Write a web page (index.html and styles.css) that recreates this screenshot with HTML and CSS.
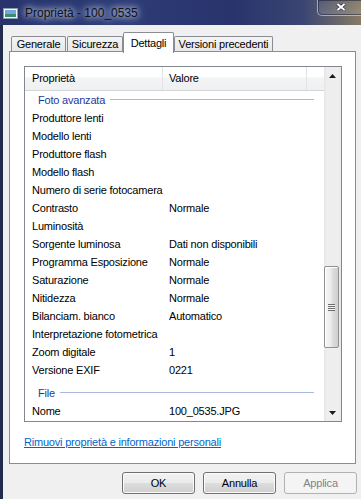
FILE: index.html
```html
<!DOCTYPE html>
<html lang="it">
<head>
    <meta charset="UTF-8">
    <title>Proprietà - 100_0535</title>
    <link rel="stylesheet" href="styles.css">
</head>
<body>
    <div class="finestra">
        <div class="titolo">
            <svg class="icona" width="15" height="11" viewBox="0 0 15 11">
                <rect x="0.5" y="0.5" width="14" height="10" fill="#f4f6f8" stroke="#8d9aab"/>
                <rect x="2" y="2" width="11" height="4" fill="#6ea9d8"/>
                <rect x="2" y="6" width="11" height="3" fill="#3f8a72"/>
            </svg>
            <span class="testo-titolo">Proprietà - 100_0535</span>
            <div class="chiudi">
                <svg width="10" height="8" viewBox="0 0 10 8">
                    <path d="M1.5 1 L8.5 7 M8.5 1 L1.5 7" stroke="#2a2f44" stroke-width="3.4"/>
                    <path d="M1.5 1 L8.5 7 M8.5 1 L1.5 7" stroke="#fff" stroke-width="2"/>
                </svg>
            </div>
        </div>

        <div class="corpo">
            <div class="schede">
                <div class="scheda generale">Generale</div>
                <div class="scheda sicurezza">Sicurezza</div>
                <div class="scheda attiva">Dettagli</div>
                <div class="scheda versioni">Versioni precedenti</div>
            </div>

            <div class="pannello">
                <div class="lista">
                    <div class="righe">
                        <div class="intestazione">
                            <div class="col1">Proprietà</div>
                            <div class="col2">Valore</div>
                            <div class="col3"></div>
                        </div>

                        <div class="gruppo"><span>Foto avanzata</span></div>
                        <div class="riga"><div class="col1">Produttore lenti</div><div class="col2"></div></div>
                        <div class="riga"><div class="col1">Modello lenti</div><div class="col2"></div></div>
                        <div class="riga"><div class="col1">Produttore flash</div><div class="col2"></div></div>
                        <div class="riga"><div class="col1">Modello flash</div><div class="col2"></div></div>
                        <div class="riga"><div class="col1">Numero di serie fotocamera</div><div class="col2"></div></div>
                        <div class="riga"><div class="col1">Contrasto</div><div class="col2">Normale</div></div>
                        <div class="riga"><div class="col1">Luminosità</div><div class="col2"></div></div>
                        <div class="riga"><div class="col1">Sorgente luminosa</div><div class="col2">Dati non disponibili</div></div>
                        <div class="riga"><div class="col1">Programma Esposizione</div><div class="col2">Normale</div></div>
                        <div class="riga"><div class="col1">Saturazione</div><div class="col2">Normale</div></div>
                        <div class="riga"><div class="col1">Nitidezza</div><div class="col2">Normale</div></div>
                        <div class="riga"><div class="col1">Bilanciam. bianco</div><div class="col2">Automatico</div></div>
                        <div class="riga"><div class="col1">Interpretazione fotometrica</div><div class="col2"></div></div>
                        <div class="riga"><div class="col1">Zoom digitale</div><div class="col2">1</div></div>
                        <div class="riga"><div class="col1">Versione EXIF</div><div class="col2">0221</div></div>

                        <div class="gruppo staccato"><span>File</span></div>
                        <div class="riga"><div class="col1">Nome</div><div class="col2">100_0535.JPG</div></div>
                    </div>

                    <div class="scroll">
                        <div class="freccia">
                            <svg width="7" height="4" viewBox="0 0 7 4"><polygon points="0,4 7,4 3.5,0" fill="#1a1a1a"/></svg>
                        </div>
                        <div class="binario">
                            <div class="cursore"><span class="presa"></span></div>
                        </div>
                        <div class="freccia">
                            <svg width="7" height="4" viewBox="0 0 7 4"><polygon points="0,0 7,0 3.5,4" fill="#1a1a1a"/></svg>
                        </div>
                    </div>
                </div>

                <a class="link" href="#">Rimuovi proprietà e informazioni personali</a>
            </div>

            <div class="pulsanti">
                <button type="button" class="predefinito">OK</button>
                <button type="button">Annulla</button>
                <button type="button" disabled>Applica</button>
            </div>
        </div>
    </div>
</body>
</html>
```

FILE: styles.css
```css
*{
    margin: 0;
    padding: 0;
    box-sizing: border-box;
}
html, body{
    width: 361px;
    height: 499px;
    overflow: hidden;
}
body{
    font-family: "Liberation Sans", Arial, sans-serif;
    font-size: 11px;
    letter-spacing: -0.2px;
    color: #000;
    background-color: #f0f0f0;
}
.finestra{
    width: 361px;
    height: 499px;
    display: flex;
    flex-direction: column;
}

/* barra del titolo */
.titolo{
    height: 25px;
    flex-shrink: 0;
    display: flex;
    align-items: center;
    position: relative;
    background: linear-gradient(90deg, #27336a 0%, #2d3b74 35%, #29346c 65%, #3a4573 84%, #877b63 100%);
}
.icona{
    margin-left: 3px;
    margin-top: 1px;
}
.testo-titolo{
    margin-left: 7px;
    font-size: 12px;
    letter-spacing: 0;
    color: #111;
    text-shadow: 0 0 5px #c3cfea, 0 0 9px #aebde2, 0 0 12px #9fb0da;
}
.chiudi{
    position: absolute;
    top: -1px;
    right: -4px;
    width: 48px;
    height: 17px;
    border: 1px solid rgba(225, 230, 245, 0.55);
    border-radius: 0 0 5px 5px;
    box-shadow: inset 0 0 0 1px rgba(20, 25, 50, 0.5);
    background: linear-gradient(rgba(255, 255, 255, 0.04), rgba(255, 255, 255, 0.14));
    display: flex;
    justify-content: center;
    padding-top: 3px;
}

/* contenuto */
.corpo{
    flex: 1;
    border-left: 3px solid #222c4d;
    padding: 7px 5px 0 6px;
}
.schede{
    display: flex;
    align-items: flex-end;
    height: 19px;
    padding-left: 2px;
    position: relative;
    z-index: 1;
}
.scheda{
    height: 15px;
    line-height: 14px;
    text-align: center;
    white-space: nowrap;
    border: 1px solid #898c95;
    border-bottom: none;
    border-radius: 2px 2px 0 0;
    background: linear-gradient(#f4f4f4, #e8e8e8);
}
.generale{
    width: 55px;
    margin-right: 1px;
}
.sicurezza{
    width: 56px;
}
.versioni{
    width: 99px;
}
.scheda.attiva{
    width: 51px;
    height: 21px;
    margin-bottom: -2px;
    padding-top: 3px;
    background: #fff;
}
.pannello{
    height: 413px;
    background-color: #fff;
    border: 1px solid #898c95;
    padding: 14px 13px 0 14px;
}

/* lista proprieta */
.lista{
    display: flex;
    height: 356px;
    border: 1px solid #828790;
}
.righe{
    flex: 1;
    overflow: hidden;
}
.intestazione{
    display: flex;
    height: 24px;
    line-height: 23px;
    border-bottom: 1px solid #d5d5d5;
    background: linear-gradient(#ffffff 0%, #ffffff 45%, #f3f4f6 46%, #eef0f2 100%);
}
.col1{
    width: 138px;
    padding-left: 7px;
    white-space: nowrap;
}
.col2{
    width: 144px;
    padding-left: 6px;
    white-space: nowrap;
}
.intestazione .col1,
.intestazione .col2{
    border-right: 1px solid #e2e3e5;
}
.col3{
    flex: 1;
}
.riga{
    display: flex;
    height: 18px;
    line-height: 18px;
}
.gruppo{
    display: flex;
    align-items: center;
    height: 18px;
    padding: 0 10px 0 13px;
    color: #1e3a96;
}
.gruppo::after{
    content: "";
    flex: 1;
    height: 1px;
    margin: 0 0 1px 5px;
    background-color: #a9b8dc;
}
.gruppo.staccato{
    height: 23px;
    padding-top: 5px;
}

/* barra di scorrimento */
.scroll{
    width: 17px;
    display: flex;
    flex-direction: column;
    background: linear-gradient(90deg, #e4e4e4 0%, #eeeeee 15%, #eeeeee 85%, #e8e8e8 100%);
}
.freccia{
    height: 17px;
    display: flex;
    align-items: center;
    justify-content: center;
}
.binario{
    flex: 1;
}
.cursore{
    width: 15px;
    height: 82px;
    margin-top: 182px;
    border: 1px solid #8f9093;
    border-radius: 2px;
    background: linear-gradient(90deg, #f7f7f7 0%, #ececec 45%, #dcdcdc 60%, #cfcfcf 100%);
    box-shadow: inset 1px 1px 0 #fff;
    display: flex;
    align-items: center;
    justify-content: center;
}
.presa{
    width: 7px;
    height: 7px;
    background: repeating-linear-gradient(#6e6e6e 0, #6e6e6e 1px, #f4f4f4 1px, #f4f4f4 2px);
}

.link{
    display: inline-block;
    margin-top: 13px;
    line-height: 15px;
    color: #0066cc;
    text-decoration: underline;
}

/* pulsanti */
.pulsanti{
    display: flex;
    justify-content: flex-end;
    gap: 8px;
    margin-top: 8px;
    margin-right: -1px;
}
button{
    width: 73px;
    height: 22px;
    font: inherit;
    letter-spacing: -0.2px;
    color: #000;
    border: 1px solid #707070;
    border-radius: 3px;
    background: linear-gradient(#f2f2f2 0%, #ebebeb 50%, #dddddd 51%, #cfcfcf 100%);
    box-shadow: inset 0 0 0 1px #fbfbfb;
}
button:disabled{
    color: #838383;
    border-color: #adb2b5;
    background: #f4f4f4;
    box-shadow: none;
}
```
